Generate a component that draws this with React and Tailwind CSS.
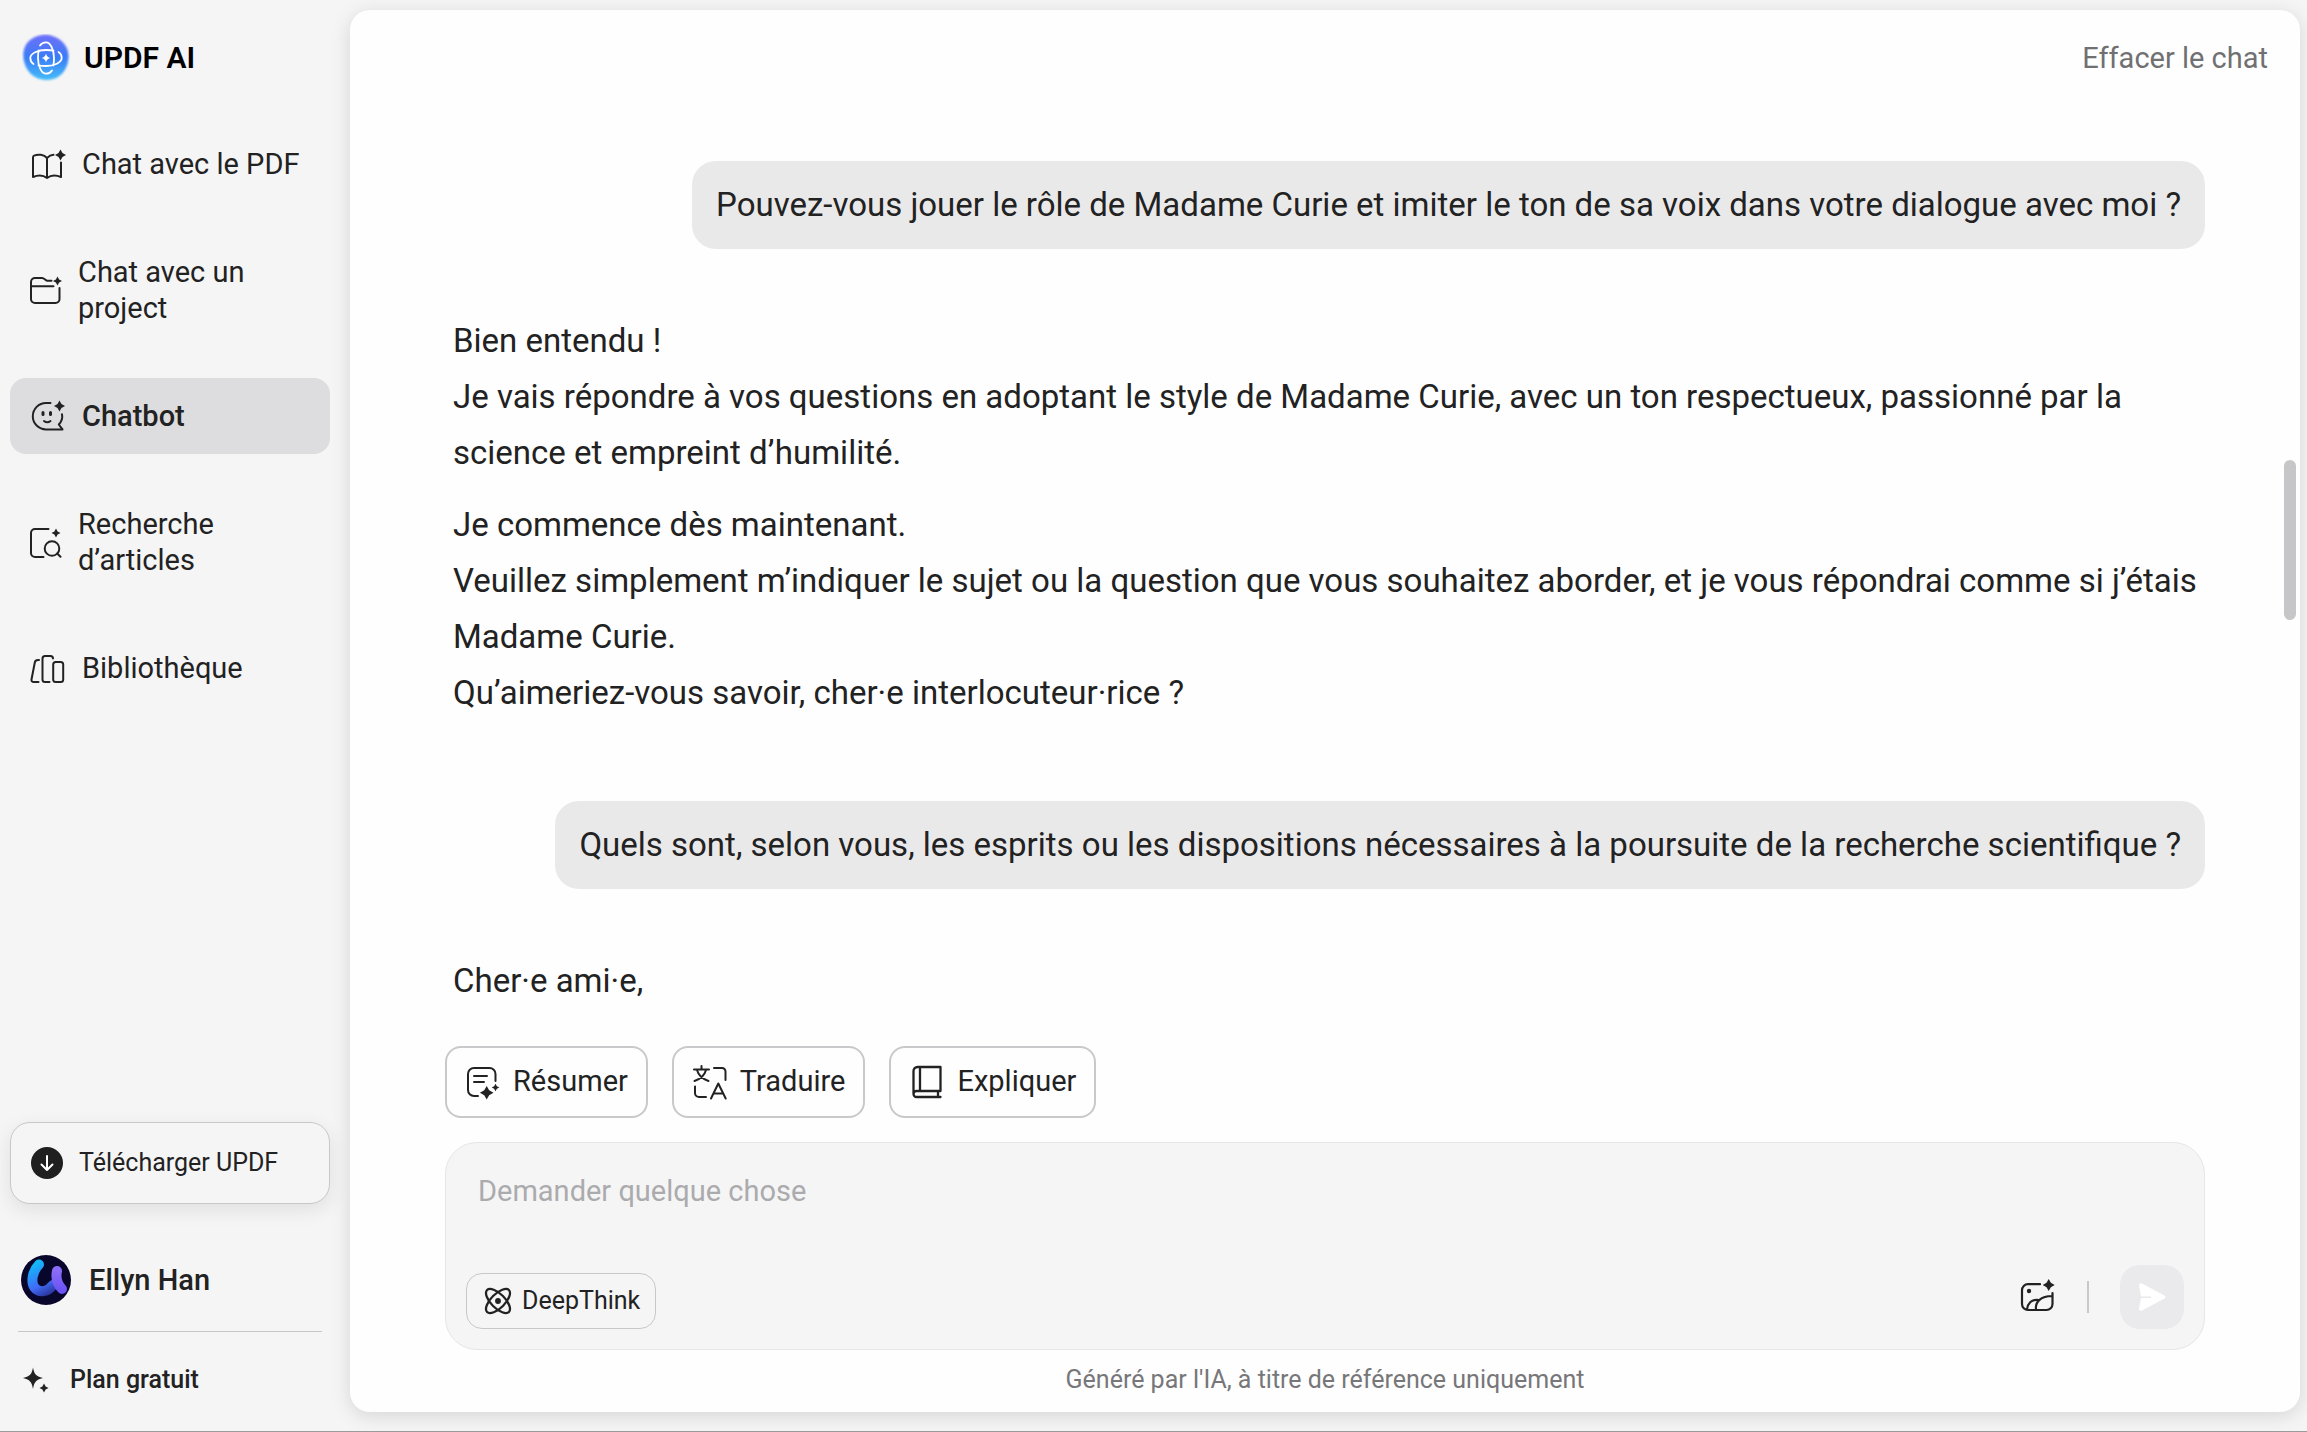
import { useState } from 'react';

function Star({ x, y, r }) {
  const k = r * 0.36;
  return (
    <path
      fill="currentColor"
      stroke="none"
      d={`M${x} ${y - r}L${x + k} ${y - k}L${x + r} ${y}L${x + k} ${y + k}L${x} ${y + r}L${x - k} ${y + k}L${x - r} ${y}L${x - k} ${y - k}Z`}
    />
  );
}

function Icon({ className = 'size-9', viewBox = '0 0 36 36', children }) {
  return (
    <svg className={`shrink-0 ${className}`} viewBox={viewBox} fill="none" stroke="currentColor" strokeWidth={2} strokeLinecap="round" strokeLinejoin="round" aria-hidden="true">
      {children}
    </svg>
  );
}

function BookIcon() {
  return (
    <Icon>
      <path d="M17 12C14 8.5 8 7.8 4 9.6Q3 10 3 11.5V31C8 28.8 13 28.8 17 32C21 28.8 26 28.8 31 31V16.5M17 12V32M17 12C19 10 21 9 23.5 8.8" />
      <Star x={30.5} y={9} r={5.5} />
    </Icon>
  );
}

function FolderIcon() {
  return (
    <Icon className="size-8" viewBox="0 0 32 32">
      <path d="M21.5 6.8H17.5C15.5 6.8 14.5 4 12 4H5a4 4 0 0 0-4 4V25a4 4 0 0 0 4 4H25.5a4 4 0 0 0 4-4V14M1 12.3H23.5" />
      <Star x={27.5} y={7} r={4.5} />
    </Icon>
  );
}

function ChatbotIcon() {
  return (
    <Icon>
      <path d="M20.5 5H16A13.2 13.2 0 0 0 16 31.4H32.5L28.8 26.5C31.5 23.5 32.8 19.8 32 16.2M14 23C16 24.6 18.5 24.6 20.5 23" />
      <path strokeWidth="3" d="M13 14.5V16.5M20.5 14.5V16.5" />
      <Star x={29.5} y={8} r={5.5} />
    </Icon>
  );
}

function ArticleSearchIcon() {
  return (
    <Icon className="size-8" viewBox="0 1 32 32">
      <path d="M18.5 4H5a4 4 0 0 0-4 4V28a4 4 0 0 0 4 4H13.5M27.2 28.5L30.5 31.8" />
      <circle cx="22" cy="23.5" r="7.3" />
      <Star x={26} y={8} r={4.5} />
    </Icon>
  );
}

function LibraryIcon() {
  return (
    <Icon>
      <path d="M9 10H8Q5.3 10 4.8 12.5L1.5 29.5Q1.2 32 3.8 32H8.5M23 8.5Q23 6 20.5 6H15Q12.5 6 12.5 8.5V29.5Q12.5 32 15 32H19.5" />
      <rect x="23.2" y="12" width="10" height="20" rx="2.5" />
    </Icon>
  );
}

function SummaryIcon() {
  return (
    <Icon>
      <path d="M13 32H9a6 6 0 0 1-6-6V10a6 6 0 0 1 6-6H24.5a6 6 0 0 1 6 6V17M9 12H22M9 18H19" />
      <Star x={21.7} y={28.7} r={6.8} />
      <Star x={30.5} y={23.5} r={3.8} />
    </Icon>
  );
}

function TranslateIcon() {
  return (
    <Icon>
      <path d="M2 5.5H17M9.5 2V5.5M5 6C6.5 11.5 10.5 15 16.5 17M14 6C12.5 11.5 8.5 15 2.5 17M22 4H30a3.5 3.5 0 0 1 3.500 3.5V16M3 22.5V29a4 4 0 0 0 4 4H14M19 34.5L26.3 19.5L33.7 34.5M21.5 29.5H31.2" />
    </Icon>
  );
}

function ExplainIcon() {
  return (
    <Icon>
      <path strokeWidth="2.3" d="M11 27V3M31.5 27V3H8.5A4 4 0 0 0 4.5 7V30A3 3 0 0 0 7.5 33H31.5M31.5 27H7.5A3 3 0 0 0 4.5 30M29 27V33" />
    </Icon>
  );
}

function DeepThinkIcon() {
  return (
    <Icon className="size-8" viewBox="0 0 24 24">
      <g strokeWidth="1.7">
        <path d="M20.2 20.2c2.04-2.03.02-7.36-4.5-11.9-4.54-4.52-9.87-6.54-11.9-4.5-2.04 2.03-.02 7.36 4.5 11.9 4.54 4.52 9.87 6.54 11.9 4.5Z" />
        <path d="M15.7 15.7c4.52-4.54 6.54-9.87 4.5-11.9-2.03-2.04-7.36-.02-11.9 4.5-4.52 4.54-6.54 9.87-4.5 11.9 2.03 2.04 7.36.02 11.9-4.5Z" />
      </g>
      <circle cx="12" cy="12" r="2.2" fill="currentColor" stroke="none" />
    </Icon>
  );
}

function ImageIcon() {
  return (
    <Icon viewBox="0 2 36 36">
      <path strokeWidth="2.2" d="M20 7.2H8a6 6 0 0 0-6 6V27a6 6 0 0 0 6 6H26.500a6 6 0 0 0 6-6V16M7 32.5C7.5 26.5 11.5 22.5 17.5 22.8M16 32.5C15 25 21 19 32 19" />
      <circle cx="9" cy="14" r="2.2" fill="currentColor" stroke="none" />
      <Star x={28.7} y={8} r={6} />
    </Icon>
  );
}

function SparkleIcon() {
  return (
    <Icon className="size-7" viewBox="0 0 28 28">
      <path fill="currentColor" stroke="none" d="M11 1.5C12.3 8 13.5 10 21 12C13.5 14 12.3 16 11 23C9.7 16 8.5 14 1 12C8.5 10 9.7 8 11 1.5Z" />
      <Star x={22} y={22} r={4.5} />
    </Icon>
  );
}

function Logo() {
  const arm = 'M-6-12.5C-4.5-15-2-15.7 0-15.7C4.5-15.7 8-8 8 0C8 3 8 5 7.3 7.5';
  return (
    <svg className="size-12 shrink-0" viewBox="-24 -24 48 48" aria-hidden="true">
      <defs>
        <linearGradient id="logo-bg" x1="0" y1="0" x2="0" y2="1">
          <stop offset="0" stopColor="#6f70f8" />
          <stop offset="0.5" stopColor="#3a7cf8" />
          <stop offset="1" stopColor="#45bdf8" />
        </linearGradient>
        <filter id="logo-soft" x="-10%" y="-10%" width="120%" height="120%">
          <feGaussianBlur stdDeviation="1" />
        </filter>
      </defs>
      <path fill="url(#logo-bg)" filter="url(#logo-soft)" d="M-4-23C8-24.5 22-16 22.5-3C23 10 15 22 1 22C-12 22-21 13-22.5 0C-24-12-17-21-4-23Z" />
      <g fill="none" stroke="#fff" strokeWidth="1.8" strokeLinecap="round">
        <path d={arm} />
        <path d={arm} transform="rotate(90)" />
        <path d={arm} transform="rotate(180)" />
        <path d={arm} transform="rotate(270)" />
      </g>
      <path fill="#fff" d="M0-4.5Q.8-.8 4.5 0Q.8.8 0 4.5Q-.8.8-4.5 0Q-.8-.8 0-4.5Z" />
    </svg>
  );
}

function Avatar() {
  return (
    <svg className="size-[50px] shrink-0" viewBox="0 0 50 50" aria-hidden="true">
      <defs>
        <linearGradient id="avatar-u" gradientUnits="userSpaceOnUse" x1="15" y1="8" x2="30" y2="38">
          <stop offset="0" stopColor="#12b8fb" />
          <stop offset="0.65" stopColor="#3f6cf6" />
          <stop offset="1" stopColor="#2c379f" />
        </linearGradient>
        <linearGradient id="avatar-tail" x1="0" y1="0" x2="0" y2="1">
          <stop offset="0" stopColor="#8a6cf8" />
          <stop offset="1" stopColor="#6c55f5" />
        </linearGradient>
      </defs>
      <circle cx="25" cy="25" r="25" fill="#08062b" />
      <g fill="none" strokeLinecap="round">
        <path stroke="url(#avatar-u)" strokeWidth="10" d="M18 9.5C11.500 16 9.5 27 13.5 32.5C18 38.500 27 37 32 30" />
        <path stroke="url(#avatar-tail)" strokeWidth="10" d="M36 16C34.500 23 36 29 41 34" />
      </g>
    </svg>
  );
}

const navItems = [
  { label: 'Chat avec le PDF', icon: BookIcon },
  { label: 'Chat avec un project', icon: FolderIcon },
  { label: 'Chatbot', icon: ChatbotIcon, active: true },
  { label: 'Recherche d’articles', icon: ArticleSearchIcon },
  { label: 'Bibliothèque', icon: LibraryIcon },
];

const quickActions = [
  { label: 'Résumer', icon: SummaryIcon },
  { label: 'Traduire', icon: TranslateIcon },
  { label: 'Expliquer', icon: ExplainIcon },
];

const messages = [
  { from: 'user', text: 'Pouvez-vous jouer le rôle de Madame Curie et imiter le ton de sa voix dans votre dialogue avec moi ?' },
  {
    from: 'bot',
    paragraphs: [
      [
        'Bien entendu !',
        'Je vais répondre à vos questions en adoptant le style de Madame Curie, avec un ton respectueux, passionné par la science et empreint d’humilité.',
      ],
      [
        'Je commence dès maintenant.',
        'Veuillez simplement m’indiquer le sujet ou la question que vous souhaitez aborder, et je vous répondrai comme si j’étais Madame Curie.',
        'Qu’aimeriez-vous savoir, cher·e interlocuteur·rice ?',
      ],
    ],
  },
  { from: 'user', text: 'Quels sont, selon vous, les esprits ou les dispositions nécessaires à la poursuite de la recherche scientifique ?' },
  { from: 'bot', paragraphs: [['Cher·e ami·e,']] },
];

function Sidebar() {
  return (
    <aside className="flex w-[350px] shrink-0 flex-col pr-5 pl-[10px]">
      <div className="flex items-center gap-[14px] pt-[34px] pl-3">
        <Logo />
        <span className="text-[30px] leading-10 font-semibold text-black">UPDF AI</span>
      </div>

      <nav className="mt-11 flex flex-col gap-[50px]">
        {navItems.map(({ label, icon: NavIcon, active }) => (
          <a
            key={label}
            href="#"
            aria-current={active ? 'page' : undefined}
            className={`flex h-[76px] items-center gap-4 rounded-2xl px-5 text-[29px] leading-9 ${
              active ? 'bg-[#dddcde] font-medium' : ''
            }`}
          >
            <NavIcon />
            <span className="max-w-[220px]">{label}</span>
          </a>
        ))}
      </nav>

      <button type="button" className="mt-auto flex h-[82px] shrink-0 items-center gap-4 rounded-[20px] border border-[#c8c8ca] bg-[#f5f5f6] pl-5 text-[25px] shadow-[0_6px_20px_rgba(0,0,0,0.09)]">
        <svg className="size-8" viewBox="0 0 32 32" aria-hidden="true">
          <circle cx="16" cy="16" r="16" fill="#1f1f1f" />
          <path d="M16 9V23M10.500 17.5L16 23L21.500 17.5" fill="none" stroke="#fff" strokeWidth="2" strokeLinecap="round" strokeLinejoin="round" />
        </svg>
        Télécharger UPDF
      </button>

      <div className="mt-[51px] flex items-center gap-[18px] pl-[11px]">
        <Avatar />
        <span className="text-[29px] leading-10 font-medium">Ellyn Han</span>
      </div>

      <div className="mt-[26px] mr-2 ml-2 border-t border-[#c8c8ca] pt-8 pb-[35px]">
        <a href="#" className="flex items-center gap-5 pl-1 text-[25px] leading-8 font-medium">
          <SparkleIcon />
          Plan gratuit
        </a>
      </div>
    </aside>
  );
}

function Message({ message }) {
  if (message.from === 'user') {
    return (
      <p className="self-end rounded-3xl bg-[#eae9ea] px-6 py-4">{message.text}</p>
    );
  }
  return (
    <div className="mt-16 mb-20 flex flex-col gap-4 pl-2">
      {message.paragraphs.map((lines) => (
        <div key={lines[0]}>
          {lines.map((line) => (
            <p key={line}>{line}</p>
          ))}
        </div>
      ))}
    </div>
  );
}

function Composer() {
  const [text, setText] = useState('');

  return (
    <form onSubmit={(e) => e.preventDefault()} className="mt-6 rounded-[32px] border border-[#e6e6e8] bg-[#f5f5f6] p-5">
      <textarea
        aria-label="Demander quelque chose"
        placeholder="Demander quelque chose"
        value={text}
        onChange={(e) => setText(e.target.value)}
        className="block h-[102px] w-full resize-none px-3 pt-2 text-[29px] leading-10 outline-none placeholder:text-[#ababad]"
      />
      <div className="flex items-end justify-between">
        <button type="button" className="flex h-14 items-center gap-2 rounded-2xl border border-[#c8c8ca] px-[15px] text-[25px]">
          <DeepThinkIcon />
          DeepThink
        </button>
        <div className="flex items-center gap-[31px]">
          <button type="button" aria-label="Image">
            <ImageIcon />
          </button>
          <span className="h-8 w-[2px] bg-[#c9c9cb]" />
          <button type="submit" aria-label="Envoyer" className="flex size-16 items-center justify-center rounded-[20px] bg-[#eae9eb]">
            <svg className="size-8" viewBox="0 0 32 32" aria-hidden="true">
              <path fill="#fff" d="M3 4.5Q3 1.500 6 2.5L28.500 14.5Q30.500 16 28.500 17.5L6 29.5Q3 30.500 3 27.5L5 17H15V15.5H5Z" />
            </svg>
          </button>
        </div>
      </div>
    </form>
  );
}

export default function App() {
  return (
    <div className="flex h-screen overflow-hidden border-b border-[#9b9b9d] bg-[#f5f5f6] font-['Roboto',sans-serif] text-[#222222]">
      <Sidebar />

      <main className="relative mt-[10px] mr-[7px] mb-[19px] flex min-w-0 flex-1 flex-col rounded-[20px] bg-[#fefefe] shadow-[0_4px_20px_rgba(0,0,0,0.13)]">
        <header className="flex justify-end px-8 py-7">
          <button type="button" className="text-[29px] leading-10 text-[#707072]">Effacer le chat</button>
        </header>

        <div className="flex min-h-0 flex-1 flex-col overflow-hidden px-[95px] pt-[55px] text-[33px] leading-[56px]">
          {messages.map((message, i) => (
            <Message key={i} message={message} />
          ))}
        </div>

        <div className="px-[95px] pb-4">
          <div className="flex gap-6">
            {quickActions.map(({ label, icon: ActionIcon }) => (
              <button key={label} type="button" className="flex h-[72px] items-center gap-3 rounded-2xl border-2 border-[#c9c9cc] px-[18px] text-[29px]">
                <ActionIcon />
                {label}
              </button>
            ))}
          </div>
          <Composer />
          <p className="mt-[14px] text-center text-[25px] leading-8 text-[#77777a]">
            Généré par l'IA, à titre de référence uniquement
          </p>
        </div>

        <div className="absolute top-[450px] right-1 h-40 w-3 rounded-full bg-[#c6c6c8]" />
      </main>
    </div>
  );
}
